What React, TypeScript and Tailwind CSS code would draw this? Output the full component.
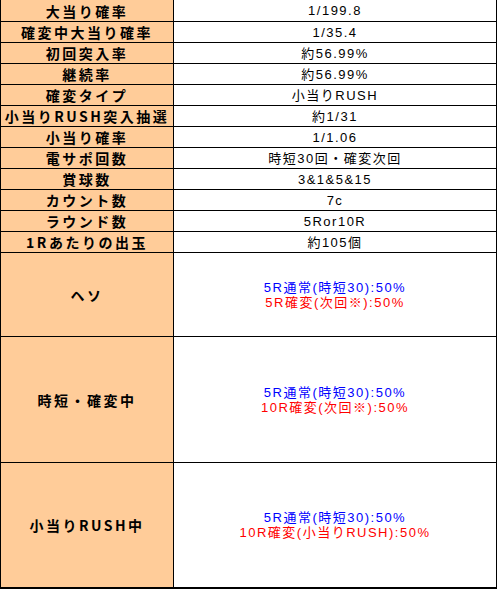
const rows: [string, string][] = [
  ['大当り確率', '1/199.8'],
  ['確変中大当り確率', '1/35.4'],
  ['初回突入率', '約56.99%'],
  ['継続率', '約56.99%'],
  ['確変タイプ', '小当りRUSH'],
  ['小当りRUSH突入抽選', '約1/31'],
  ['小当り確率', '1/1.06'],
  ['電サポ回数', '時短30回・確変次回'],
  ['賞球数', '3&1&5&15'],
  ['カウント数', '7c'],
  ['ラウンド数', '5Ror10R'],
  ['1Rあたりの出玉', '約105個'],
]

const splits = [
  { label: 'ヘソ', blue: '5R通常(時短30):50%', red: '5R確変(次回※):50%', h: 'h-[84px] border-b' },
  { label: '時短・確変中', blue: '5R通常(時短30):50%', red: '10R確変(次回※):50%', h: 'h-[126px] border-b' },
  { label: '小当りRUSH中', blue: '5R通常(時短30):50%', red: '10R確変(小当りRUSH):50%', h: 'h-[126px] border-b-2' },
]

const labelFont = { fontFamily: '"Noto Sans CJK JP", "Noto Sans", sans-serif' }
const valueFont = { fontFamily: '"Liberation Sans", "Noto Sans CJK JP", sans-serif' }

const App = () => {
  return (
    <div className="w-[497px] bg-white border-l border-r border-black">
      {rows.map(([label, value], i) => (
        <div
          key={label}
          className={`flex border-b border-black ${i === 0 ? 'h-[22px]' : 'h-[21px]'}`}
        >
          <div
            className="w-[173px] shrink-0 border-r border-black bg-[#ffcc99] flex items-center justify-center text-[14px] font-bold tracking-[2.5px] leading-none text-black"
            style={labelFont}
          >
            {label}
          </div>
          <div
            className="flex-1 flex items-center justify-center text-[13px] tracking-[1.5px] leading-none text-black"
            style={valueFont}
          >
            {value}
          </div>
        </div>
      ))}
      {splits.map((s) => (
        <div key={s.label} className={`flex border-black ${s.h}`}>
          <div
            className="w-[173px] shrink-0 border-r border-black bg-[#ffcc99] flex items-center justify-center text-[14px] font-bold tracking-[2.5px] leading-none text-black"
            style={labelFont}
          >
            {s.label}
          </div>
          <div
            className="flex-1 flex flex-col items-center justify-center text-[13px] tracking-[1.5px] leading-[15px]"
            style={valueFont}
          >
            <span className="text-[#0000ff]">{s.blue}</span>
            <span className="text-[#ff0000]">{s.red}</span>
          </div>
        </div>
      ))}
    </div>
  )
}

export default App
